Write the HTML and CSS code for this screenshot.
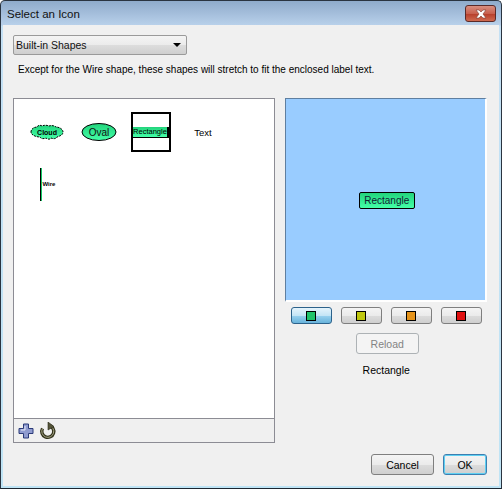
FILE: index.html
```html
<!DOCTYPE html>
<html lang="en">
<head>
    <meta charset="UTF-8">
    <title>Select an Icon</title>
    <link rel="stylesheet" href="styles.css">
</head>
<body>
    <div class="window">
        <div class="titlebar">
            <span class="title">Select an Icon</span>
            <button class="close-btn">
                <svg width="14" height="10" viewBox="0 0 14 10">
                    <path d="M2 1h3l2 2 2-2h3l-3 4 3 4H9L7 7 5 9H2l3-4z" fill="#fff" stroke="#7a3a30" stroke-width="0.6"/>
                </svg>
            </button>
        </div>

        <div class="client">
            <div class="combo">
                <span>Built-in Shapes</span>
                <span class="combo-arrow"></span>
            </div>
            <p class="note">Except for the Wire shape, these shapes will stretch to fit the enclosed label text.</p>

            <div class="main">
                <!-- Liste des formes -->
                <div class="list-panel">
                    <div class="shape-grid">
                        <div class="shape-cell">
                            <svg width="36" height="20" viewBox="0 0 36 20">
                                <defs>
                                    <linearGradient id="g1" x1="0" y1="0" x2="0" y2="1">
                                        <stop offset="0" stop-color="#22d47c"/>
                                        <stop offset="1" stop-color="#44ffa8"/>
                                    </linearGradient>
                                </defs>
                                <path d="M2 10c0-3 3-5 6-5 1-2 4-2 5-1 2-1 5-1 7 0 3-1 6 0 7 1 3 0 7 2 7 5s-3 4-6 5c-1 2-4 2-6 1-1 2-4 1-5 0-2 1-5 1-6-1-4 0-9-2-9-5z" fill="url(#g1)" stroke="#000" stroke-dasharray="2 1"/>
                                <text x="18" y="12.500" class="tiny-label" text-anchor="middle">Cloud</text>
                            </svg>
                        </div>
                        <div class="shape-cell">
                            <svg width="36" height="20" viewBox="0 0 36 20">
                                <ellipse cx="18" cy="10" rx="17" ry="8.5" fill="url(#g1)" stroke="#000"/>
                                <text x="18" y="14" class="oval-label" text-anchor="middle">Oval</text>
                            </svg>
                        </div>
                        <div class="shape-cell">
                            <div class="selected-box">
                                <div class="mini-rect">Rectangle</div>
                            </div>
                        </div>
                        <div class="shape-cell text-shape">Text</div>
                        <div class="shape-cell">
                            <div class="wire">
                                <span class="wire-line"></span>
                                <span class="wire-label">Wire</span>
                            </div>
                        </div>
                    </div>
                    <div class="list-toolbar">
                        <svg width="16" height="16" viewBox="0 0 16 16">
                            <path d="M5.500 1h5v4.500H15v5h-4.500V15h-5v-4.500H1v-5h4.500z" fill="#8f9bcf" stroke="#2b3a78"/>
                            <path d="M7 3v4H3" fill="none" stroke="#e6eaf8"/>
                        </svg>
                        <svg width="18" height="18" viewBox="0 0 18 18">
                            <path d="M10 3.500a6 6 0 1 1-6.500 3" fill="none" stroke="#33331c" stroke-width="3.400"/>
                            <path d="M10 3.500a6 6 0 1 1-6.500 3" fill="none" stroke="#a8a888" stroke-width="1"/>
                            <path d="M9 0l6 4.500L9 8z" fill="#55553a" stroke="#2a2a18" stroke-width="0.6"/>
                        </svg>
                    </div>
                </div>

                <!-- Apercu et couleurs -->
                <div class="side">
                    <div class="preview">
                        <div class="preview-rect">Rectangle</div>
                    </div>
                    <div class="swatches">
                        <button class="swatch-btn active"><span class="swatch green"></span></button>
                        <button class="swatch-btn"><span class="swatch yellow"></span></button>
                        <button class="swatch-btn"><span class="swatch orange"></span></button>
                        <button class="swatch-btn"><span class="swatch red"></span></button>
                    </div>
                    <button class="btn reload">Reload</button>
                    <div class="shape-name">Rectangle</div>
                </div>
            </div>

            <div class="footer">
                <button class="btn cancel">Cancel</button>
                <button class="btn ok">OK</button>
            </div>
        </div>
    </div>
</body>
</html>
```

FILE: styles.css
```css
html, body {
    margin: 0;
    padding: 0;
}

body {
    font-family: "Liberation Sans", Arial, sans-serif;
    font-size: 10.5px;
    color: #000;
    background: #fff;
}

.window {
    width: 502px;
    height: 489px;
    box-sizing: border-box;
    display: flex;
    flex-direction: column;
    border: 1px solid #2a3440;
    border-bottom-color: #1c2630;
    border-radius: 5px 5px 0 0;
    padding: 0 2px 2px 2px;
    background: linear-gradient(to bottom, #8fabcb 0, #b8d0ea 24px, #c4e0f4 25px, #bfe4f5 100%);
}

/* Barre de titre */
.titlebar {
    height: 24px;
    flex-shrink: 0;
    display: flex;
    align-items: flex-start;
    justify-content: space-between;
}

.title {
    font-size: 11.5px;
    line-height: 14px;
    margin-top: 6px;
    margin-left: 4px;
    color: #111;
}

.close-btn {
    width: 31px;
    height: 17px;
    margin: 4px 3px 0 0;
    padding: 0;
    display: flex;
    align-items: center;
    justify-content: center;
    border: 1px solid #5a2a28;
    border-radius: 3px;
    background: linear-gradient(to bottom, #d98f80 0, #c8604e 50%, #b8402c 55%, #cf6a50 100%);
}

.client {
    flex: 1;
    display: flex;
    flex-direction: column;
    background: #f0f0f0;
    padding: 10px 12px 0 10px;
    min-height: 0;
}

/* Liste deroulante */
.combo {
    width: 174px;
    height: 20px;
    box-sizing: border-box;
    display: flex;
    align-items: center;
    justify-content: space-between;
    padding: 0 5px 0 2px;
    border: 1px solid #9a9a9a;
    border-radius: 2px;
    background: linear-gradient(to bottom, #f4f4f4 0, #ebebeb 50%, #dcdcdc 52%, #cfcfcf 100%);
    color: #111;
}

.combo-arrow {
    width: 0;
    height: 0;
    border-left: 4px solid transparent;
    border-right: 4px solid transparent;
    border-top: 4px solid #000;
}

.note {
    margin: 7px 0 0 5px;
    font-size: 10px;
    line-height: 15px;
    height: 15px;
    white-space: nowrap;
}

.main {
    display: flex;
    gap: 10px;
    margin-top: 21px;
}

/* Panneau des formes */
.list-panel {
    width: 263px;
    height: 345px;
    box-sizing: border-box;
    display: flex;
    flex-direction: column;
    border: 1px solid #8c8c94;
}

.shape-grid {
    flex: 1;
    background: #fff;
    display: grid;
    grid-template-columns: repeat(4, 52px);
    grid-auto-rows: 52px;
    padding: 7px 0 0 7px;
    align-content: start;
}

.shape-cell {
    display: flex;
    align-items: center;
    justify-content: center;
}

.tiny-label {
    font-size: 7px;
    font-weight: bold;
    fill: #000;
}

.oval-label {
    font-size: 10px;
    fill: #111;
}

.selected-box {
    width: 40px;
    height: 40px;
    box-sizing: border-box;
    border: 2px solid #000;
    display: flex;
    align-items: center;
}

.mini-rect {
    width: 100%;
    height: 11px;
    box-sizing: border-box;
    border-bottom: 1px solid #000;
    border-right: 2px solid #000;
    background: linear-gradient(to bottom, #22d47c, #44ffa8);
    font-size: 7.5px;
    line-height: 10px;
    text-align: center;
    overflow: hidden;
}

.text-shape {
    font-size: 9.5px;
}

.wire {
    display: flex;
    align-items: center;
    margin-right: 2px;
    height: 33px;
}

.wire-line {
    width: 1px;
    height: 33px;
    flex-shrink: 0;
    border-left: 1px solid #000;
    background: #12c864;
}

.wire-label {
    font-size: 6px;
    width: 10px;
    margin-left: 1px;
    font-weight: bold;
}

.list-toolbar {
    height: 23px;
    flex-shrink: 0;
    border-top: 1px solid #8c8c94;
    display: flex;
    align-items: center;
    gap: 5px;
    padding-left: 4px;
    background: #f0f0f0;
}

/* Colonne de droite */
.side {
    width: 202px;
    display: flex;
    flex-direction: column;
    align-items: center;
}

.preview {
    width: 100%;
    height: 204px;
    box-sizing: border-box;
    border: 1px solid #5f7fa0;
    border-right-color: #fff;
    border-bottom-color: #fff;
    border-width: 1px 2px 2px 1px;
    padding: 1px 0 0 2px;
    background: #99ccff;
    display: flex;
    align-items: center;
    justify-content: center;
}

.preview-rect {
    width: 56px;
    height: 17px;
    box-sizing: border-box;
    border: 1px solid #000;
    border-radius: 2px;
    background: linear-gradient(to bottom, #22d47c, #44ffa8);
    font-size: 10px;
    line-height: 15px;
    text-align: center;
    color: #123;
}

.swatches {
    display: flex;
    gap: 9px;
    margin-top: 5px;
}

button {
    font-family: inherit;
    font-size: 10.5px;
    color: #000;
}

.swatch-btn {
    width: 41px;
    height: 17px;
    padding: 0;
    display: flex;
    align-items: center;
    justify-content: center;
    border: 1px solid #7f7f7f;
    border-radius: 3px;
    background: linear-gradient(to bottom, #f4f4f4 0, #ebebeb 50%, #dcdcdc 52%, #cfcfcf 100%);
}

.swatch-btn.active {
    border-color: #2c628b;
    background: linear-gradient(to bottom, #e5f4fc 0, #c4e5f6 50%, #98d1ef 52%, #68b3db 100%);
}

.swatch {
    width: 8px;
    height: 8px;
    border: 1px solid #000;
}

.green { background: #1fc36a; }
.yellow { background: #bfc70f; }
.orange { background: #e5931a; }
.red { background: #e01010; }

.btn {
    height: 21px;
    padding: 0;
    border: 1px solid #7f7f7f;
    border-radius: 3px;
    background: linear-gradient(to bottom, #f4f4f4 0, #ebebeb 50%, #dcdcdc 52%, #cfcfcf 100%);
}

.reload {
    width: 63px;
    margin: 9px 0 0 2px;
    background: #f4f4f4;
    border-color: #adb2b5;
    color: #838383;
}

.shape-name {
    margin-top: 9px;
    line-height: 15px;
}

.footer {
    display: flex;
    justify-content: flex-end;
    gap: 9px;
    margin-top: 11px;
}

.cancel {
    width: 63px;
}

.ok {
    width: 44px;
    border-color: #3c7fb1;
    box-shadow: inset 0 0 0 1px #5fd0f2;
}
```
